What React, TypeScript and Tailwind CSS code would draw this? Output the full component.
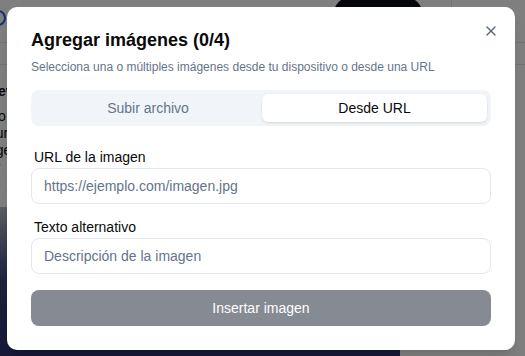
import React from 'react';
import { X } from 'lucide-react';

// page content sitting under the dialog overlay
const PageBehind = () => (
  <div className="flex h-full flex-col bg-white">
    <header className="flex h-[43px] shrink-0 items-start border-b border-[#e5e7eb]">
      <div className="-ml-[10px] mt-[10px] h-4 w-4 rounded-full border-2 border-[#2563eb]" />
      <div className="ml-auto -mt-1 h-10 w-[90px] rounded-full bg-[#0b0f19]" />
      <div className="ml-7 h-full w-px bg-[#e5e7eb]" />
      <div className="w-[73px]" />
    </header>
    <div className="flex h-[22px] shrink-0 border-b border-[#e5e7eb]" />
    <div className="-ml-[12px] flex flex-col pt-[18px] text-[14px] leading-[17px] text-[#111]">
      <span className="font-bold">Rew</span>
      <span className="mt-[8px]">Co</span>
      <span>our</span>
      <span>age</span>
      <span className="text-[#2563eb]">ar</span>
      <span className="text-[#2563eb]">re</span>
    </div>
    <div className="mt-[14px] flex flex-1">
      <div className="w-[400px] bg-gradient-to-b from-[#b9bcc4] via-[#3c4378] to-[#2c3170]" />
    </div>
  </div>
);

export default function App() {
  return (
    <div className="relative h-[356px] w-[525px] overflow-hidden font-['Liberation_Sans',Arial,sans-serif]">
      <PageBehind />
      <div className="absolute inset-0 bg-black/50" />

      <div className="absolute left-[7px] top-[7px] flex w-[508px] flex-col rounded-[10px] bg-white p-6 shadow-lg">
        <button className="absolute right-4 top-4 text-slate-700 opacity-80">
          <X className="h-4 w-4" strokeWidth={2} />
        </button>

        <h2 className="text-[18px] font-bold leading-[18px] text-[#0a0a0a]">Agregar imágenes (0/4)</h2>
        <p className="mt-[10px] text-[12px] leading-4 text-[#64748b]">
          Selecciona una o múltiples imágenes desde tu dispositivo o desde una URL
        </p>

        <div className="mt-[15px] grid h-9 grid-cols-2 rounded-lg bg-[#f1f5f9] p-1 text-[14px]">
          <div className="flex items-center justify-center text-[#64748b]">Subir archivo</div>
          <div className="ml-px flex items-center justify-center rounded-md bg-white text-[#0a0a0a] shadow-sm">
            Desde URL
          </div>
        </div>

        <div className="mt-[21px] flex flex-col gap-px">
          <label className="pl-[3px] text-[14px] leading-5 text-[#0a0a0a]">URL de la imagen</label>
          <div className="flex h-9 items-center rounded-lg border border-[#e2e8f0] px-3 text-[14px] text-[#64748b]">
            https://ejemplo.com/imagen.jpg
          </div>
        </div>

        <div className="mt-[13px] flex flex-col gap-px">
          <label className="pl-[3px] text-[14px] leading-5 text-[#0a0a0a]">Texto alternativo</label>
          <div className="flex h-9 items-center rounded-lg border border-[#e2e8f0] px-3 text-[14px] text-[#64748b]">
            Descripción de la imagen
          </div>
        </div>

        <button className="mt-4 flex h-9 w-full items-center justify-center rounded-lg bg-[#0f172a] text-[14px] text-white opacity-50">
          Insertar imagen
        </button>
      </div>
    </div>
  );
}
